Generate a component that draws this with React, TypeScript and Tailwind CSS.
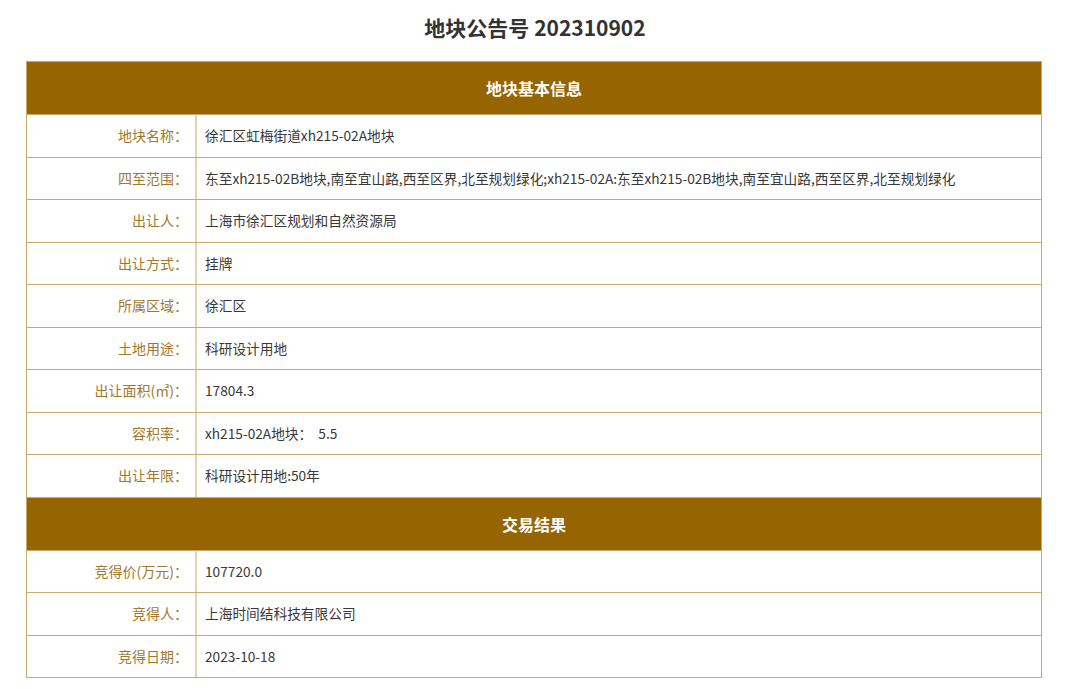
const baseRows = [
  { label: "地块名称：", value: "徐汇区虹梅街道xh215-02A地块" },
  {
    label: "四至范围：",
    value:
      "东至xh215-02B地块,南至宜山路,西至区界,北至规划绿化;xh215-02A:东至xh215-02B地块,南至宜山路,西至区界,北至规划绿化",
  },
  { label: "出让人：", value: "上海市徐汇区规划和自然资源局" },
  { label: "出让方式：", value: "挂牌" },
  { label: "所属区域：", value: "徐汇区" },
  { label: "土地用途：", value: "科研设计用地" },
  { label: "出让面积(㎡)：", value: "17804.3" },
  { label: "容积率：", value: "xh215-02A地块：  5.5" },
  { label: "出让年限：", value: "科研设计用地:50年" },
];

const resultRows = [
  { label: "竞得价(万元)：", value: "107720.0" },
  { label: "竞得人：", value: "上海时间结科技有限公司" },
  { label: "竞得日期：", value: "2023-10-18" },
];

const Section = ({ title }: { title: string }) => (
  <div className="flex h-[52px] items-center justify-center bg-[#966400] text-[16px] font-bold text-white">
    {title}
  </div>
);

const Row = ({ label, value }: { label: string; value: string }) => (
  <div className="flex h-[42.5px] border-t border-[#c9aa6c]">
    <div className="flex w-[170px] shrink-0 items-center justify-end border-r-2 border-[#e6d3ac] pr-[7px] text-[14px] text-[#a0782c]">
      {label}
    </div>
    <div className="flex items-center whitespace-pre pl-[8px] text-[13.7px] text-[#383838]">
      {value}
    </div>
  </div>
);

export default function App() {
  return (
    <div
      className="min-h-[689px] bg-white"
      style={{ fontFamily: '"Noto Sans CJK SC", "Open Sans", sans-serif' }}
    >
      <h1 className="flex h-[61px] items-center justify-center pb-[5px] pr-[10px] text-[21px] font-bold text-[#333333]">
        地块公告号 202310902
      </h1>
      <div className="ml-[26px] mr-[38px] border border-[#c9aa6c]">
        <Section title="地块基本信息" />
        {baseRows.map((r) => (
          <Row key={r.label} {...r} />
        ))}
        <div className="border-t border-[#c9aa6c]">
          <Section title="交易结果" />
        </div>
        {resultRows.map((r) => (
          <Row key={r.label} {...r} />
        ))}
      </div>
    </div>
  );
}
